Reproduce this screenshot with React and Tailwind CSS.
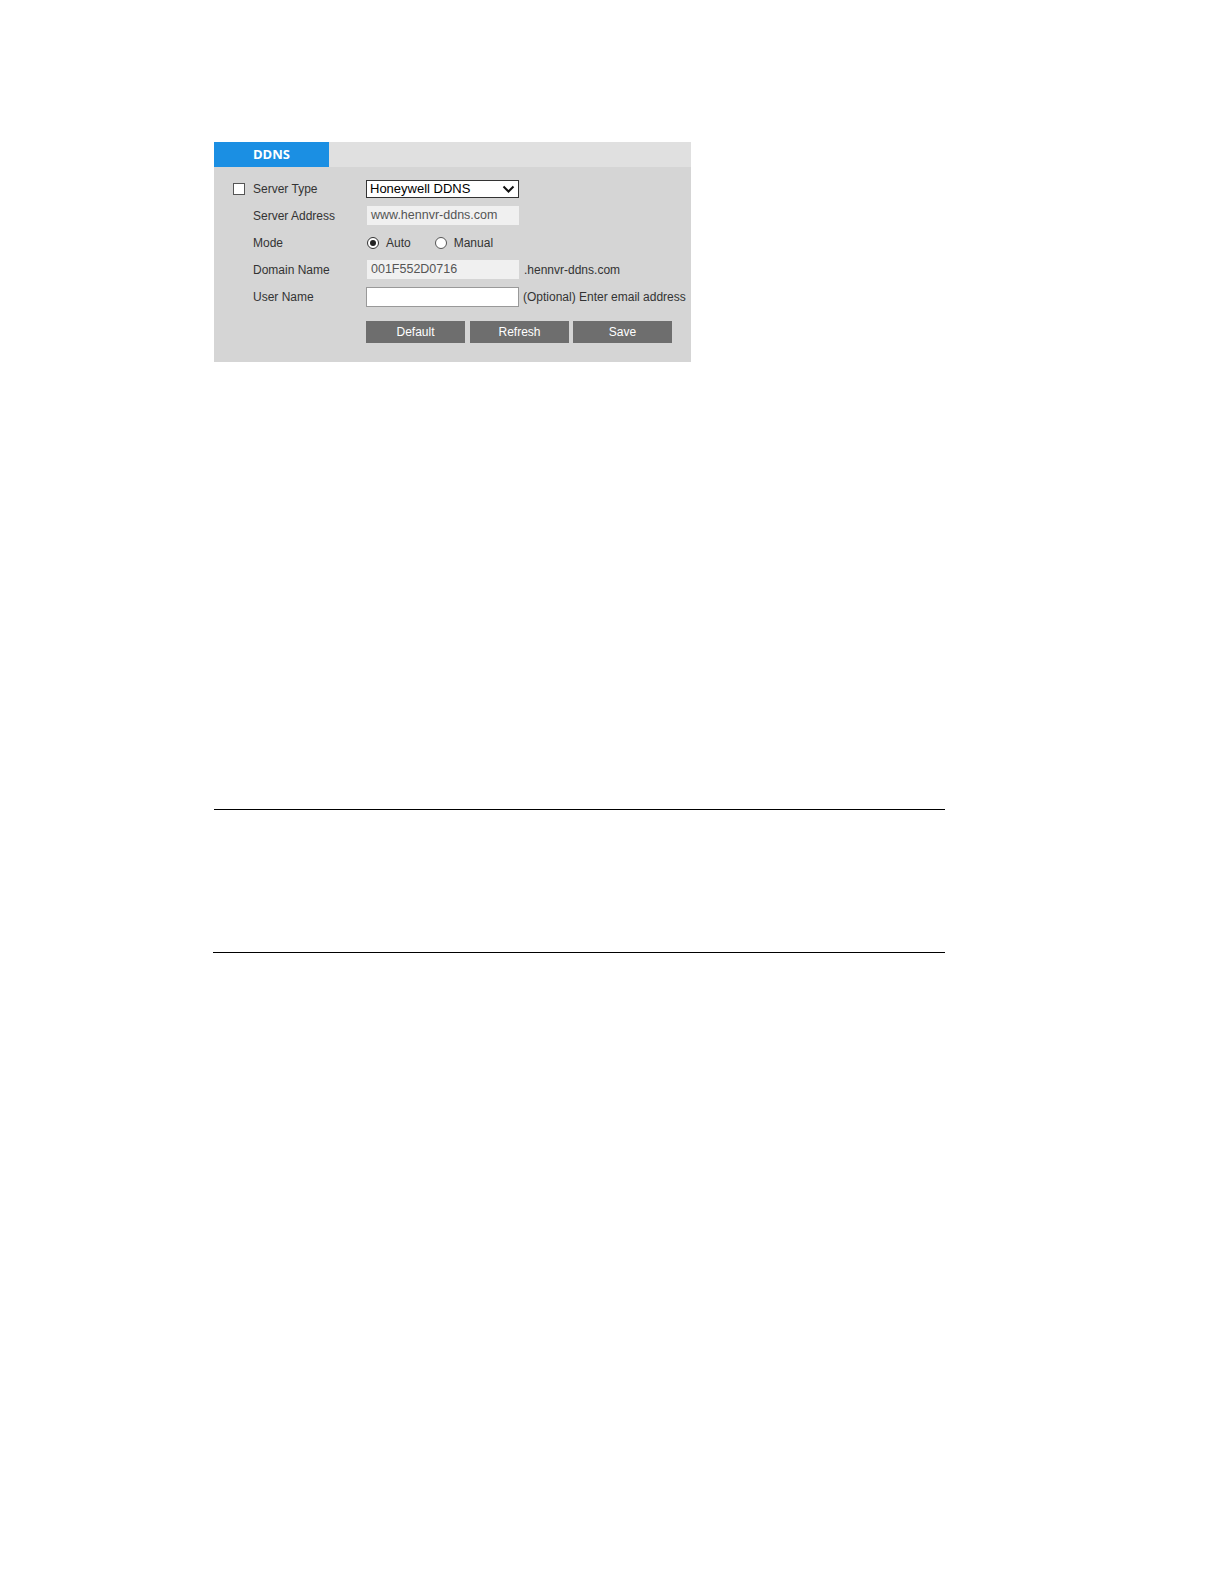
export default function App() {
  const font = { fontFamily: '"Liberation Sans", Arial, sans-serif' };
  return (
    <div className="w-[1224px] h-[1584px] bg-white relative" style={font}>
      <div className="pt-[142px] pl-[214px]">
        <div className="w-[477px] h-[220px] bg-[#d5d5d5] flex flex-col">
          <div className="h-[25px] bg-[#e0e0e0] flex">
            <div className="w-[115px] h-full bg-[#1b8fe3] flex items-center pl-[39px] text-white text-[13px] font-bold" style={{ fontFamily: '"Open Sans", "DejaVu Sans", sans-serif' }}>DDNS</div>
          </div>
          <div className="flex flex-col pt-[13px] text-[12px] text-[#333]">
            <div className="flex items-center h-[18px]">
              <div className="w-[39px] flex justify-end pr-[8px]">
                <div className="w-[12px] h-[12px] border border-[#555] bg-white"></div>
              </div>
              <div className="w-[113px]">Server Type</div>
              <div className="w-[153px] h-[18px] border border-[#333] bg-white flex items-center justify-between pl-[3px] pr-[3px] text-[13px] text-black">
                <span>Honeywell DDNS</span>
                <svg width="13" height="9" viewBox="0 0 13 9"><path d="M1.5 1.5 L6.5 6.5 L11.5 1.5" fill="none" stroke="#111" strokeWidth="2" /></svg>
              </div>
            </div>
            <div className="flex items-center h-[19px] mt-[8px]">
              <div className="w-[39px]"></div>
              <div className="w-[114px]">Server Address</div>
              <div className="w-[152px] h-[19px] bg-[#f0f0f0] flex items-center pl-[4px] text-[12.5px] text-[#555]">www.hennvr-ddns.com</div>
            </div>
            <div className="flex items-center h-[19px] mt-[8px]">
              <div className="w-[39px]"></div>
              <div className="w-[114px]">Mode</div>
              <div className="flex items-center">
                <div className="w-[12px] h-[12px] rounded-full border border-[#333] bg-white flex items-center justify-center">
                  <div className="w-[6px] h-[6px] rounded-full bg-[#222]"></div>
                </div>
                <span className="ml-[7px]">Auto</span>
                <div className="w-[12px] h-[12px] rounded-full border border-[#555] bg-white ml-[24px]"></div>
                <span className="ml-[7px]">Manual</span>
              </div>
            </div>
            <div className="flex items-center h-[19px] mt-[8px]">
              <div className="w-[39px]"></div>
              <div className="w-[114px]">Domain Name</div>
              <div className="w-[152px] h-[19px] bg-[#f0f0f0] flex items-center pl-[4px] text-[12.5px] text-[#555]">001F552D0716</div>
              <span className="ml-[5px]">.hennvr-ddns.com</span>
            </div>
            <div className="flex items-center h-[20px] mt-[8px]">
              <div className="w-[39px]"></div>
              <div className="w-[113px]">User Name</div>
              <div className="w-[153px] h-[20px] bg-white border border-[#999]"></div>
              <span className="ml-[4px]">(Optional) Enter email address</span>
            </div>
            <div className="flex items-center h-[22px] mt-[14px]">
              <div className="w-[152px]"></div>
              <div className="w-[99px] h-[22px] bg-[#6e6e6e] text-white flex items-center justify-center">Default</div>
              <div className="w-[99px] h-[22px] bg-[#6e6e6e] text-white flex items-center justify-center ml-[5px]">Refresh</div>
              <div className="w-[99px] h-[22px] bg-[#6e6e6e] text-white flex items-center justify-center ml-[4px]">Save</div>
            </div>
          </div>
        </div>
      </div>
      <div className="ml-[214px] mt-[447px] w-[731px] h-[1px] bg-black"></div>
      <div className="ml-[213px] mt-[142px] w-[732px] h-[1px] bg-black"></div>
    </div>
  );
}
